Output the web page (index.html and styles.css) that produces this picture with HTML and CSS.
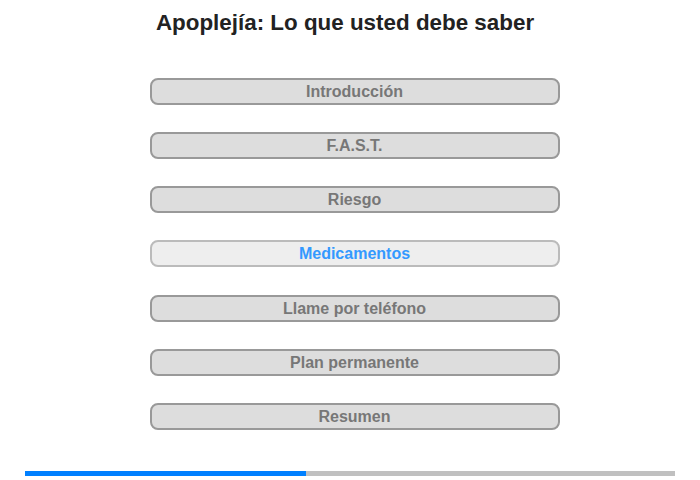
FILE: index.html
```html
<!DOCTYPE html>
<html>
<head>
<meta charset="utf-8">
<link rel="stylesheet" href="styles.css">
</head>
<body>
<div class="page">
  <h1 class="title">Apoplejía: Lo que usted debe saber</h1>
  <nav class="menu">
    <div class="item">Introducción</div>
    <div class="item">F.A.S.T.</div>
    <div class="item">Riesgo</div>
    <div class="item active">Medicamentos</div>
    <div class="item">Llame por teléfono</div>
    <div class="item">Plan permanente</div>
    <div class="item">Resumen</div>
  </nav>
  <div class="progress"><div class="fill" style="width:281px"></div></div>
</div>
</body>
</html>
```
FILE: styles.css
```css
html, body { margin: 0; padding: 0; background: #fff; }
body { font-family: "Liberation Sans", Arial, sans-serif; }
.page { width: 700px; display: flex; flex-direction: column; align-items: center; }
.title { margin: 10px 0 0 -10px; font-size: 22.4px; font-weight: bold; color: #222; line-height: 26px; }
.menu { display: flex; flex-direction: column; gap: 27.15px; margin-top: 42px; margin-left: 9px; }
.item {
  box-sizing: border-box; width: 410px; height: 27px;
  border: 2px solid #999; border-radius: 8px; background: #ddd;
  color: #777; font-weight: bold; font-size: 16px; line-height: 23px; text-align: center;
}
.item.active { background: #eee; border-color: #bbb; color: #3399ff; }
.progress { width: 650px; height: 5px; background: #c0c0c0; margin-top: 41px; }
.fill { height: 100%; background: #0080ff; }
```
